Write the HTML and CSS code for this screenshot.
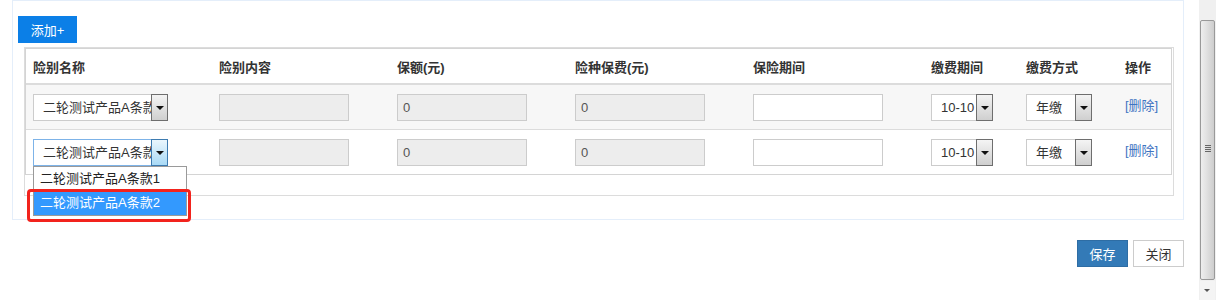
FILE: index.html
```html
<!DOCTYPE html>
<html lang="zh-CN">
<head>
  <meta charset="UTF-8">
  <link rel="stylesheet" href="styles.css">
  <title>险别信息</title>
</head>
<body>
  <div class="page">
    <div class="main">
      <div class="panel">
        <button class="btn-add">添加+</button>
        <div class="grid-box">
          <table class="grid">
            <colgroup>
              <col style="width:186px"><col style="width:178px"><col style="width:178px"><col style="width:178px">
              <col style="width:178px"><col style="width:95px"><col style="width:99px"><col style="width:53px">
            </colgroup>
            <tr class="head">
              <th>险别名称</th>
              <th>险别内容</th>
              <th>保额(元)</th>
              <th>险种保费(元)</th>
              <th>保险期间</th>
              <th>缴费期间</th>
              <th>缴费方式</th>
              <th>操作</th>
            </tr>
            <tr class="odd">
              <td>
                <div class="sel sel-name"><span class="sel-text">二轮测试产品A条款</span><span class="sel-arrow"></span></div>
              </td>
              <td><div class="inp ro"></div></td>
              <td><div class="inp ro">0</div></td>
              <td><div class="inp ro">0</div></td>
              <td><div class="inp"></div></td>
              <td><div class="sel sel-term"><span class="sel-text">10-10</span><span class="sel-arrow"></span></div></td>
              <td><div class="sel sel-way"><span class="sel-text">年缴</span><span class="sel-arrow"></span></div></td>
              <td><a class="del" href="#">[删除]</a></td>
            </tr>
            <tr>
              <td>
                <div class="sel sel-name focus">
                  <span class="sel-text">二轮测试产品A条款</span><span class="sel-arrow"></span>
                  <div class="drop">
                    <div class="opt">二轮测试产品A条款1</div>
                    <div class="opt on">二轮测试产品A条款2</div>
                    <div class="mark"></div>
                  </div>
                </div>
              </td>
              <td><div class="inp ro"></div></td>
              <td><div class="inp ro">0</div></td>
              <td><div class="inp ro">0</div></td>
              <td><div class="inp"></div></td>
              <td><div class="sel sel-term"><span class="sel-text">10-10</span><span class="sel-arrow"></span></div></td>
              <td><div class="sel sel-way"><span class="sel-text">年缴</span><span class="sel-arrow"></span></div></td>
              <td><a class="del" href="#">[删除]</a></td>
            </tr>
          </table>
        </div>
      </div>
      <div class="actions">
        <button class="btn btn-save">保存</button>
        <button class="btn btn-close">关闭</button>
      </div>
    </div>
    <div class="scrollbar">
      <div class="sb-top"></div>
      <div class="sb-thumb"><span class="grip"></span></div>
      <div class="sb-down"></div>
    </div>
  </div>
</body>
</html>
```

FILE: styles.css
```css
body {
  margin: 0;
  font-family: "Liberation Sans", "Noto Sans CJK SC", sans-serif;
  font-size: 13px;
  color: #333;
  background-color: #fff;
}

.page {
  display: flex;
  height: 300px;
  overflow: hidden;
}

.main {
  flex: 1;
  padding: 0 15px 0 12px;
}

.panel {
  border: 1px solid #e4eefa;
  padding: 15px 9px 23px 5px;
}

.btn-add {
  display: block;
  width: 59px;
  height: 27px;
  border: none;
  background-color: #0b7fe7;
  color: #fff;
  font-family: inherit;
  font-size: 13px;
  padding: 0;
  margin: 0 0 4px 0;
}

.grid-box {
  margin-left: 6px;
  border: 1px solid #dcdcdc;
  padding-bottom: 20px;
}

.grid {
  table-layout: fixed;
  width: 1147px;
  border-collapse: separate;
  border-spacing: 0;
  border: 1px solid #d4d4d4;
}

.grid th {
  text-align: left;
  font-weight: bold;
  height: 34px;
  padding: 0 0 0 7px;
  border-bottom: 2px solid #dcdcdc;
  color: #333;
  white-space: nowrap;
}

.grid td {
  height: 44px;
  padding: 0 0 0 7px;
  border-bottom: 1px solid #dcdcdc;
  vertical-align: middle;
}

.grid tr:last-child td {
  border-bottom: none;
}

.grid tr.odd td {
  background-color: #f7f7f7;
}

.inp {
  box-sizing: border-box;
  width: 130px;
  height: 27px;
  border: 1px solid #cccccc;
  background-color: #fff;
  color: #555;
  padding-left: 5px;
  line-height: 25px;
}

.inp.ro {
  background-color: #ededed;
}

.sel {
  position: relative;
  box-sizing: border-box;
  height: 27px;
  border: 1px solid #cccccc;
  background-color: #fff;
  display: flex;
}

.sel-text {
  flex: 1;
  overflow: hidden;
  white-space: nowrap;
  padding-left: 9px;
  line-height: 25px;
  color: #333;
}

.sel-arrow {
  width: 15px;
  border: 1px solid #6e6e6e;
  margin: -1px -1px -1px 0;
  background: linear-gradient(#f4f4f4, #cfcfcf);
  position: relative;
}

.sel-arrow::after {
  content: "";
  position: absolute;
  left: 4px;
  top: 11px;
  border-left: 4px solid transparent;
  border-right: 4px solid transparent;
  border-top: 4px solid #111;
}

.sel-name { width: 135px; }
.sel-term { width: 62px; }
.sel-way { width: 66px; }

.sel.focus {
  border-color: #7db3e8;
}

.sel.focus .sel-arrow {
  border-color: #3d7bb0;
  background: linear-gradient(#eaf6fd, #a9daf6);
}

.drop {
  position: absolute;
  left: -1px;
  top: 26px;
  width: 154px;
  box-sizing: border-box;
  border: 1px solid #9a9a9a;
  background-color: #fff;
  z-index: 2;
}

.opt {
  height: 24px;
  line-height: 24px;
  padding-left: 6px;
  color: #222;
  white-space: nowrap;
}

.opt.on {
  background-color: #3399fe;
  color: #fff;
}

.mark {
  position: absolute;
  left: -7px;
  top: 22px;
  width: 164px;
  height: 33px;
  box-sizing: border-box;
  border: 3px solid #f2231d;
  border-radius: 4px;
}

.del {
  display: block;
  margin-top: -5px;
  color: #3f74c2;
  text-decoration: none;
}

.actions {
  display: flex;
  justify-content: flex-end;
  gap: 5px;
  margin-top: 20px;
}

.btn {
  width: 51px;
  height: 27px;
  font-family: inherit;
  font-size: 13px;
  padding: 0;
}

.btn-save {
  background-color: #337ab7;
  border: 1px solid #2e6da4;
  color: #fff;
}

.btn-close {
  background-color: #fff;
  border: 1px solid #cccccc;
  color: #333;
}

.scrollbar {
  width: 17px;
  background-color: #f0f0f0;
  display: flex;
  flex-direction: column;
}

.sb-top {
  height: 20px;
}

.sb-thumb {
  height: 258px;
  margin: 0 1px 0 1px;
  border: 1px solid #999;
  border-radius: 2px;
  background: linear-gradient(to right, #eeeeee, #e2e2e2 40%, #cdcdcd);
  position: relative;
}

.grip {
  position: absolute;
  left: 4px;
  top: 124px;
  width: 6px;
  height: 7px;
  background: repeating-linear-gradient(#666 0 1px, transparent 1px 2px);
}

.sb-down {
  flex: 1;
  position: relative;
  background-color: #f4f4f4;
  margin: 1px 1px 0 1px;
}

.sb-down::after {
  content: "";
  position: absolute;
  left: 4px;
  top: 8px;
  border-left: 3px solid transparent;
  border-right: 3px solid transparent;
  border-top: 3px solid #555;
}
```
